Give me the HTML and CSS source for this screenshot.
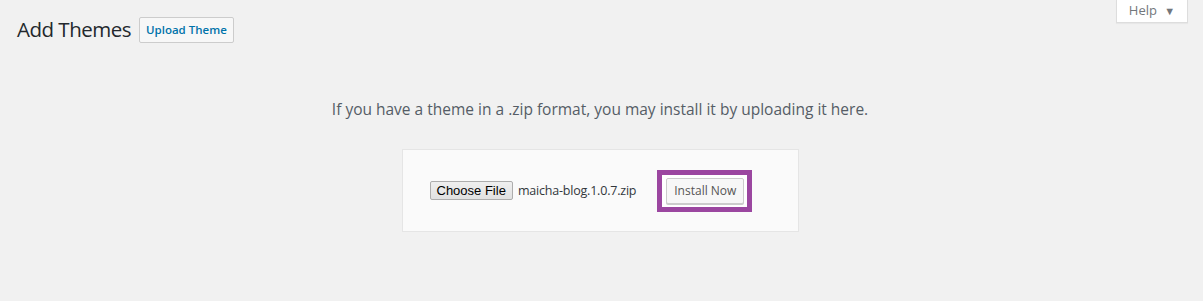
FILE: index.html
```html
<!DOCTYPE html>
<html lang="en">
<head>
    <meta charset="UTF-8">
    <title>Add Themes</title>
    <link rel="stylesheet" href="styles.css">
</head>
<body>
    <div class="screen-meta">
        <button class="help-tab">Help <span class="caret">&#9660;</span></button>
    </div>
    <div class="wrap">
        <div class="page-head">
            <h1>Add Themes</h1>
            <a href="#" class="page-title-action">Upload Theme</a>
        </div>
        <div class="upload-theme">
            <p class="install-help">If you have a theme in a .zip format, you may install it by uploading it here.</p>
            <form class="upload-form">
                <span class="file-btn">Choose File</span>
                <span class="file-name">maicha-blog.1.0.7.zip</span>
                <span class="highlight">
                    <button type="button" class="button">Install Now</button>
                </span>
            </form>
        </div>
    </div>
</body>
</html>
```

FILE: styles.css
```css
body {
    margin: 0;
    background: #f1f1f1;
    color: #444;
    font-family: "Open Sans", "Noto Sans", sans-serif;
    font-size: 13px;
}
.screen-meta {
    position: absolute;
    top: 0;
    right: 15px;
}
.help-tab {
    width: 72px;
    height: 23px;
    background: #fff;
    border: 1px solid #ddd;
    border-top: none;
    color: #72777c;
    font-family: inherit;
    font-size: 13px;
    padding: 0 0 2px;
    box-shadow: 0 1px 1px rgba(0,0,0,0.04);
}
.help-tab .caret {
    font-size: 11px;
    margin-left: 4px;
    color: #72777c;
}
.wrap {
    padding: 0 17px;
}
.page-head {
    display: flex;
    align-items: center;
    gap: 8px;
    padding-top: 15px;
}
.page-head h1 {
    margin: 0;
    font-size: 20.5px;
    letter-spacing: -0.5px;
    font-weight: 400;
    color: #23282d;
    line-height: 29px;
}
.page-title-action {
    display: inline-block;
    height: 24px;
    line-height: 24px;
    padding: 0 6px;
    border: 1px solid #ccc;
    border-radius: 2px;
    background: #f7f7f7;
    color: #0073aa;
    font-size: 11.5px;
    font-weight: 600;
    text-decoration: none;
    white-space: nowrap;
}
.upload-theme {
    text-align: center;
    margin-right: 3px;
}
.install-help {
    margin: 54px 0 29px;
    font-size: 15.5px;
    color: #555d66;
}
.upload-form {
    display: inline-flex;
    align-items: center;
    width: 397px;
    height: 83px;
    box-sizing: border-box;
    padding: 0 27px;
    background: #fafafa;
    border: 1px solid #e5e5e5;
    white-space: nowrap;
}
.file-btn {
    flex-shrink: 0;
    font-family: "Liberation Sans", Arial, sans-serif;
    font-size: 13px;
    color: #000;
    background: linear-gradient(#efefef, #e1e1e1);
    border: 1px solid #adadad;
    border-radius: 2px;
    padding: 1px 6px;
    line-height: 15px;
}
.file-name {
    flex-shrink: 0;
    margin-left: 5px;
    color: #32373c;
    font-size: 12.5px;
    letter-spacing: -0.2px;
}
.highlight {
    flex-shrink: 0;
    margin-left: 21px;
    border: 5px solid #9b46a0;
    background: #fff;
    padding: 3px 3px 3px 4px;
    display: flex;
}
.button {
    height: 26px;
    width: 78px;
    padding: 0 0 1px;
    border: 1px solid #ccc;
    border-radius: 2px;
    background: #f7f7f7;
    box-shadow: 0 1px 0 #ccc;
    color: #555;
    font-family: inherit;
    font-size: 12px;
    white-space: nowrap;
}
```
